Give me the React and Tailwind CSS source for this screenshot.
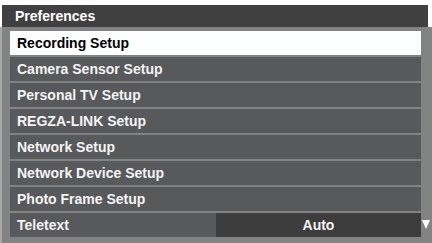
const items = [
  "Camera Sensor Setup",
  "Personal TV Setup",
  "REGZA-LINK Setup",
  "Network Setup",
  "Network Device Setup",
  "Photo Frame Setup",
];

export default function App() {
  return (
    <div
      className="w-[432px] h-[243px] bg-white flex flex-col pt-[5px] overflow-hidden"
      style={{ fontFamily: '"Liberation Sans", Arial, sans-serif' }}
    >
      <div className="ml-[2px] mr-[4px] h-[22px] bg-[#404040] flex items-center pl-[13px] text-white font-bold text-[14px] shrink-0">
        Preferences
      </div>
      <div className="flex-1 bg-[#838383] border-l-2 border-[#a8a8a8] pt-[4px] pl-[8px] pr-[11px] flex flex-col gap-[2px]">
        <div className="h-[24px] bg-[#fdfeff] flex items-center pl-[7px] text-black font-bold text-[14px]">
          Recording Setup
        </div>
        {items.map((label) => (
          <div
            key={label}
            className="h-[24px] bg-[#58595b] flex items-center pl-[7px] text-[#f4f4f4] font-bold text-[14px]"
          >
            {label}
          </div>
        ))}
        <div className="relative h-[24px] bg-[#58595b] flex items-center text-[#f4f4f4] font-bold text-[14px]">
          <div className="flex-1 pl-[7px]">Teletext</div>
          <div className="w-[205px] h-full bg-[#3d3d3e] flex items-center justify-center">Auto</div>
          <div className="absolute -right-[9px] top-[7px] w-0 h-0 border-l-[4px] border-r-[4px] border-t-[9px] border-l-transparent border-r-transparent border-t-white" />
        </div>
      </div>
    </div>
  );
}
